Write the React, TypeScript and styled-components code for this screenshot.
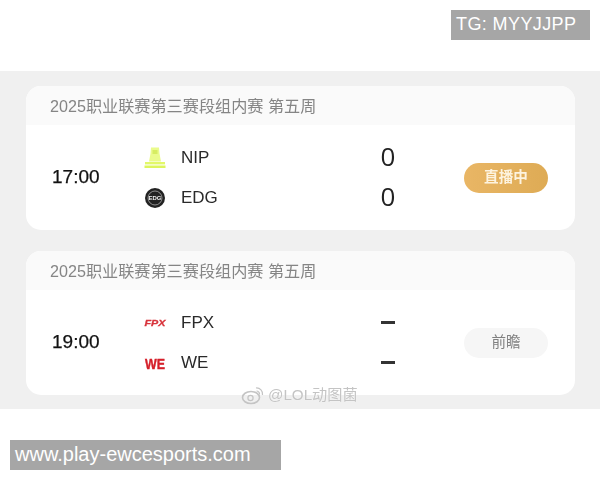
import React from "react";
import styled, { createGlobalStyle } from "styled-components";

const Global = createGlobalStyle`
  html, body { margin: 0; padding: 0; background: #fff; }
  body { font-family: "Liberation Sans", "Noto Sans CJK SC", sans-serif; }
`;

const Page = styled.div`
  width: 600px;
  height: 480px;
  display: flex;
  flex-direction: column;
  overflow: hidden;
  background: #fff;
`;

const TopBar = styled.div`
  height: 71px;
  flex: none;
  display: flex;
  justify-content: flex-end;
  align-items: flex-start;
  padding: 10px 10px 0 0;
  box-sizing: border-box;
`;

const Tag = styled.div<{ $width: number; $size: number; $spacing: number }>`
  width: ${(p) => p.$width}px;
  height: 30px;
  box-sizing: border-box;
  padding-left: 5px;
  background: #a6a6a6;
  color: #fff;
  font-size: ${(p) => p.$size}px;
  letter-spacing: ${(p) => p.$spacing}px;
  line-height: 29px;
  white-space: nowrap;
`;

const Panel = styled.div`
  position: relative;
  height: 338px;
  flex: none;
  box-sizing: border-box;
  padding: 15px 25px 0 26px;
  background: #f0f0f0;
  display: flex;
  flex-direction: column;
  gap: 21px;
`;

const Card = styled.section`
  height: 144px;
  flex: none;
  border-radius: 15px;
  overflow: hidden;
  background: #fff;
  display: flex;
  flex-direction: column;
  filter: blur(0.4px);
`;

const CardHeader = styled.div`
  height: 39px;
  flex: none;
  box-sizing: border-box;
  padding-left: 24px;
  background: #fafafa;
  color: #858585;
  font-size: 16.15px;
  line-height: 40px;
  white-space: nowrap;
`;

const CardBody = styled.div`
  flex: 1;
  display: flex;
  align-items: center;
  padding-left: 26px;
`;

const Time = styled.div`
  width: 91px;
  flex: none;
  box-sizing: border-box;
  padding-bottom: 2px;
  color: #111;
  font-size: 19px;
  line-height: 24px;
  -webkit-text-stroke: 0.25px #111;
`;

const Teams = styled.div`
  width: 280px;
  flex: none;
  display: flex;
  flex-direction: column;
`;

const TeamRow = styled.div`
  height: 40px;
  display: flex;
  align-items: center;
`;

const Logo = styled.svg`
  width: 24px;
  height: 24px;
  flex: none;
  margin-right: 14px;
`;

const TeamName = styled.span`
  width: 186px;
  flex: none;
  color: #2a2a2a;
  font-size: 17px;
`;

const Score = styled.span`
  width: 42px;
  flex: none;
  box-sizing: border-box;
  padding-bottom: 4px;
  text-align: center;
  color: #222;
  font-family: "Open Sans", "Liberation Sans", sans-serif;
  font-size: 26px;
  line-height: 30px;
`;

const Dash = styled.span`
  width: 14px;
  height: 2.5px;
  flex: none;
  margin-left: 14px;
  background: #333;
`;

const StatusPill = styled.div<{ $live?: boolean }>`
  width: 84px;
  height: 30px;
  flex: none;
  margin-left: 41px;
  border-radius: 15px;
  text-align: center;
  font-size: 14.6px;
  line-height: 29px;
  background: ${(p) => (p.$live ? "linear-gradient(90deg, #e9b665, #deab55)" : "#f6f6f6")};
  color: ${(p) => (p.$live ? "#fdf3df" : "#808080")};
  font-weight: ${(p) => (p.$live ? 700 : 400)};
`;

const Watermark = styled.div`
  position: absolute;
  left: 241px;
  top: 314px;
  display: flex;
  align-items: center;
  gap: 3px;
  color: #c4c4c4;
  font-size: 15.2px;
  line-height: 20px;
  white-space: nowrap;
  text-shadow: 0 0 1px #fff;
  filter: blur(0.5px);
`;

const WeiboIcon = styled.svg`
  width: 24px;
  height: 20px;
  flex: none;
`;

const Footer = styled.div`
  flex: 1;
  box-sizing: border-box;
  padding: 31px 0 0 10px;
`;

const NipLogo = () => (
  <Logo viewBox="0 0 24 24">
    <path d="M8 1.5h8l.5 6 1.5 8H6l1.5-8z" fill="#eafb8c" />
    <rect x="9.5" y="4" width="5" height="4" fill="#d6ec62" />
    <rect x="2" y="16" width="20" height="2.4" fill="#e2f86a" />
    <rect x="1.5" y="19.5" width="21" height="2.5" fill="#ddf55c" />
  </Logo>
);

const EdgLogo = () => (
  <Logo viewBox="0 0 24 24">
    <circle cx="12" cy="12" r="10" fill="#222" />
    <circle cx="12" cy="12" r="7" fill="none" stroke="#bbb" strokeWidth="0.7" />
    <text x="12" y="14" textAnchor="middle" fontSize="6" fontWeight="700" fill="#eee" fontFamily="Liberation Sans">EDG</text>
  </Logo>
);

const FpxLogo = () => (
  <Logo viewBox="0 0 24 24">
    <text x="12" y="15" textAnchor="middle" fontSize="9.5" fontWeight="700" fontStyle="italic" fill="#d8343c" stroke="#d8343c" strokeWidth="0.3" fontFamily="Liberation Sans" textLength="21" lengthAdjust="spacingAndGlyphs">FPX</text>
  </Logo>
);

const WeLogo = () => (
  <Logo viewBox="0 0 24 24">
    <text x="12" y="17.5" textAnchor="middle" fontSize="14" fontWeight="700" fill="#d5202a" stroke="#d5202a" strokeWidth="0.4" fontFamily="Liberation Sans" textLength="20" lengthAdjust="spacingAndGlyphs">WE</text>
  </Logo>
);

type Team = { name: string; logo: React.ReactNode; score?: string };
type Match = { time: string; teams: Team[]; live?: boolean };

const matches: Match[] = [
  {
    time: "17:00",
    live: true,
    teams: [
      { name: "NIP", logo: <NipLogo />, score: "0" },
      { name: "EDG", logo: <EdgLogo />, score: "0" },
    ],
  },
  {
    time: "19:00",
    teams: [
      { name: "FPX", logo: <FpxLogo /> },
      { name: "WE", logo: <WeLogo /> },
    ],
  },
];

export default function App() {
  return (
    <Page>
      <Global />
      <TopBar>
        <Tag $width={139} $size={18} $spacing={0.4}>TG: MYYJJPP</Tag>
      </TopBar>
      <Panel>
        {matches.map((m) => (
          <Card key={m.time}>
            <CardHeader>2025职业联赛第三赛段组内赛 第五周</CardHeader>
            <CardBody>
              <Time>{m.time}</Time>
              <Teams>
                {m.teams.map((t) => (
                  <TeamRow key={t.name}>
                    {t.logo}
                    <TeamName>{t.name}</TeamName>
                    {t.score ? <Score>{t.score}</Score> : <Dash />}
                  </TeamRow>
                ))}
              </Teams>
              <StatusPill $live={m.live}>{m.live ? "直播中" : "前瞻"}</StatusPill>
            </CardBody>
          </Card>
        ))}
        <Watermark>
          <WeiboIcon viewBox="0 0 24 20">
            <ellipse cx="10" cy="12.5" rx="8.5" ry="6" fill="none" stroke="#c4c4c4" strokeWidth="1.6" />
            <circle cx="9.5" cy="13" r="2.6" fill="none" stroke="#c4c4c4" strokeWidth="1.2" />
            <path d="M15 3a6 6 0 0 1 6.5 7M15.5 6a3 3 0 0 1 3 3.5" fill="none" stroke="#c4c4c4" strokeWidth="1.2" />
          </WeiboIcon>
          @LOL动图菌
        </Watermark>
      </Panel>
      <Footer>
        <Tag $width={271} $size={20} $spacing={0}>www.play-ewcesports.com</Tag>
      </Footer>
    </Page>
  );
}
